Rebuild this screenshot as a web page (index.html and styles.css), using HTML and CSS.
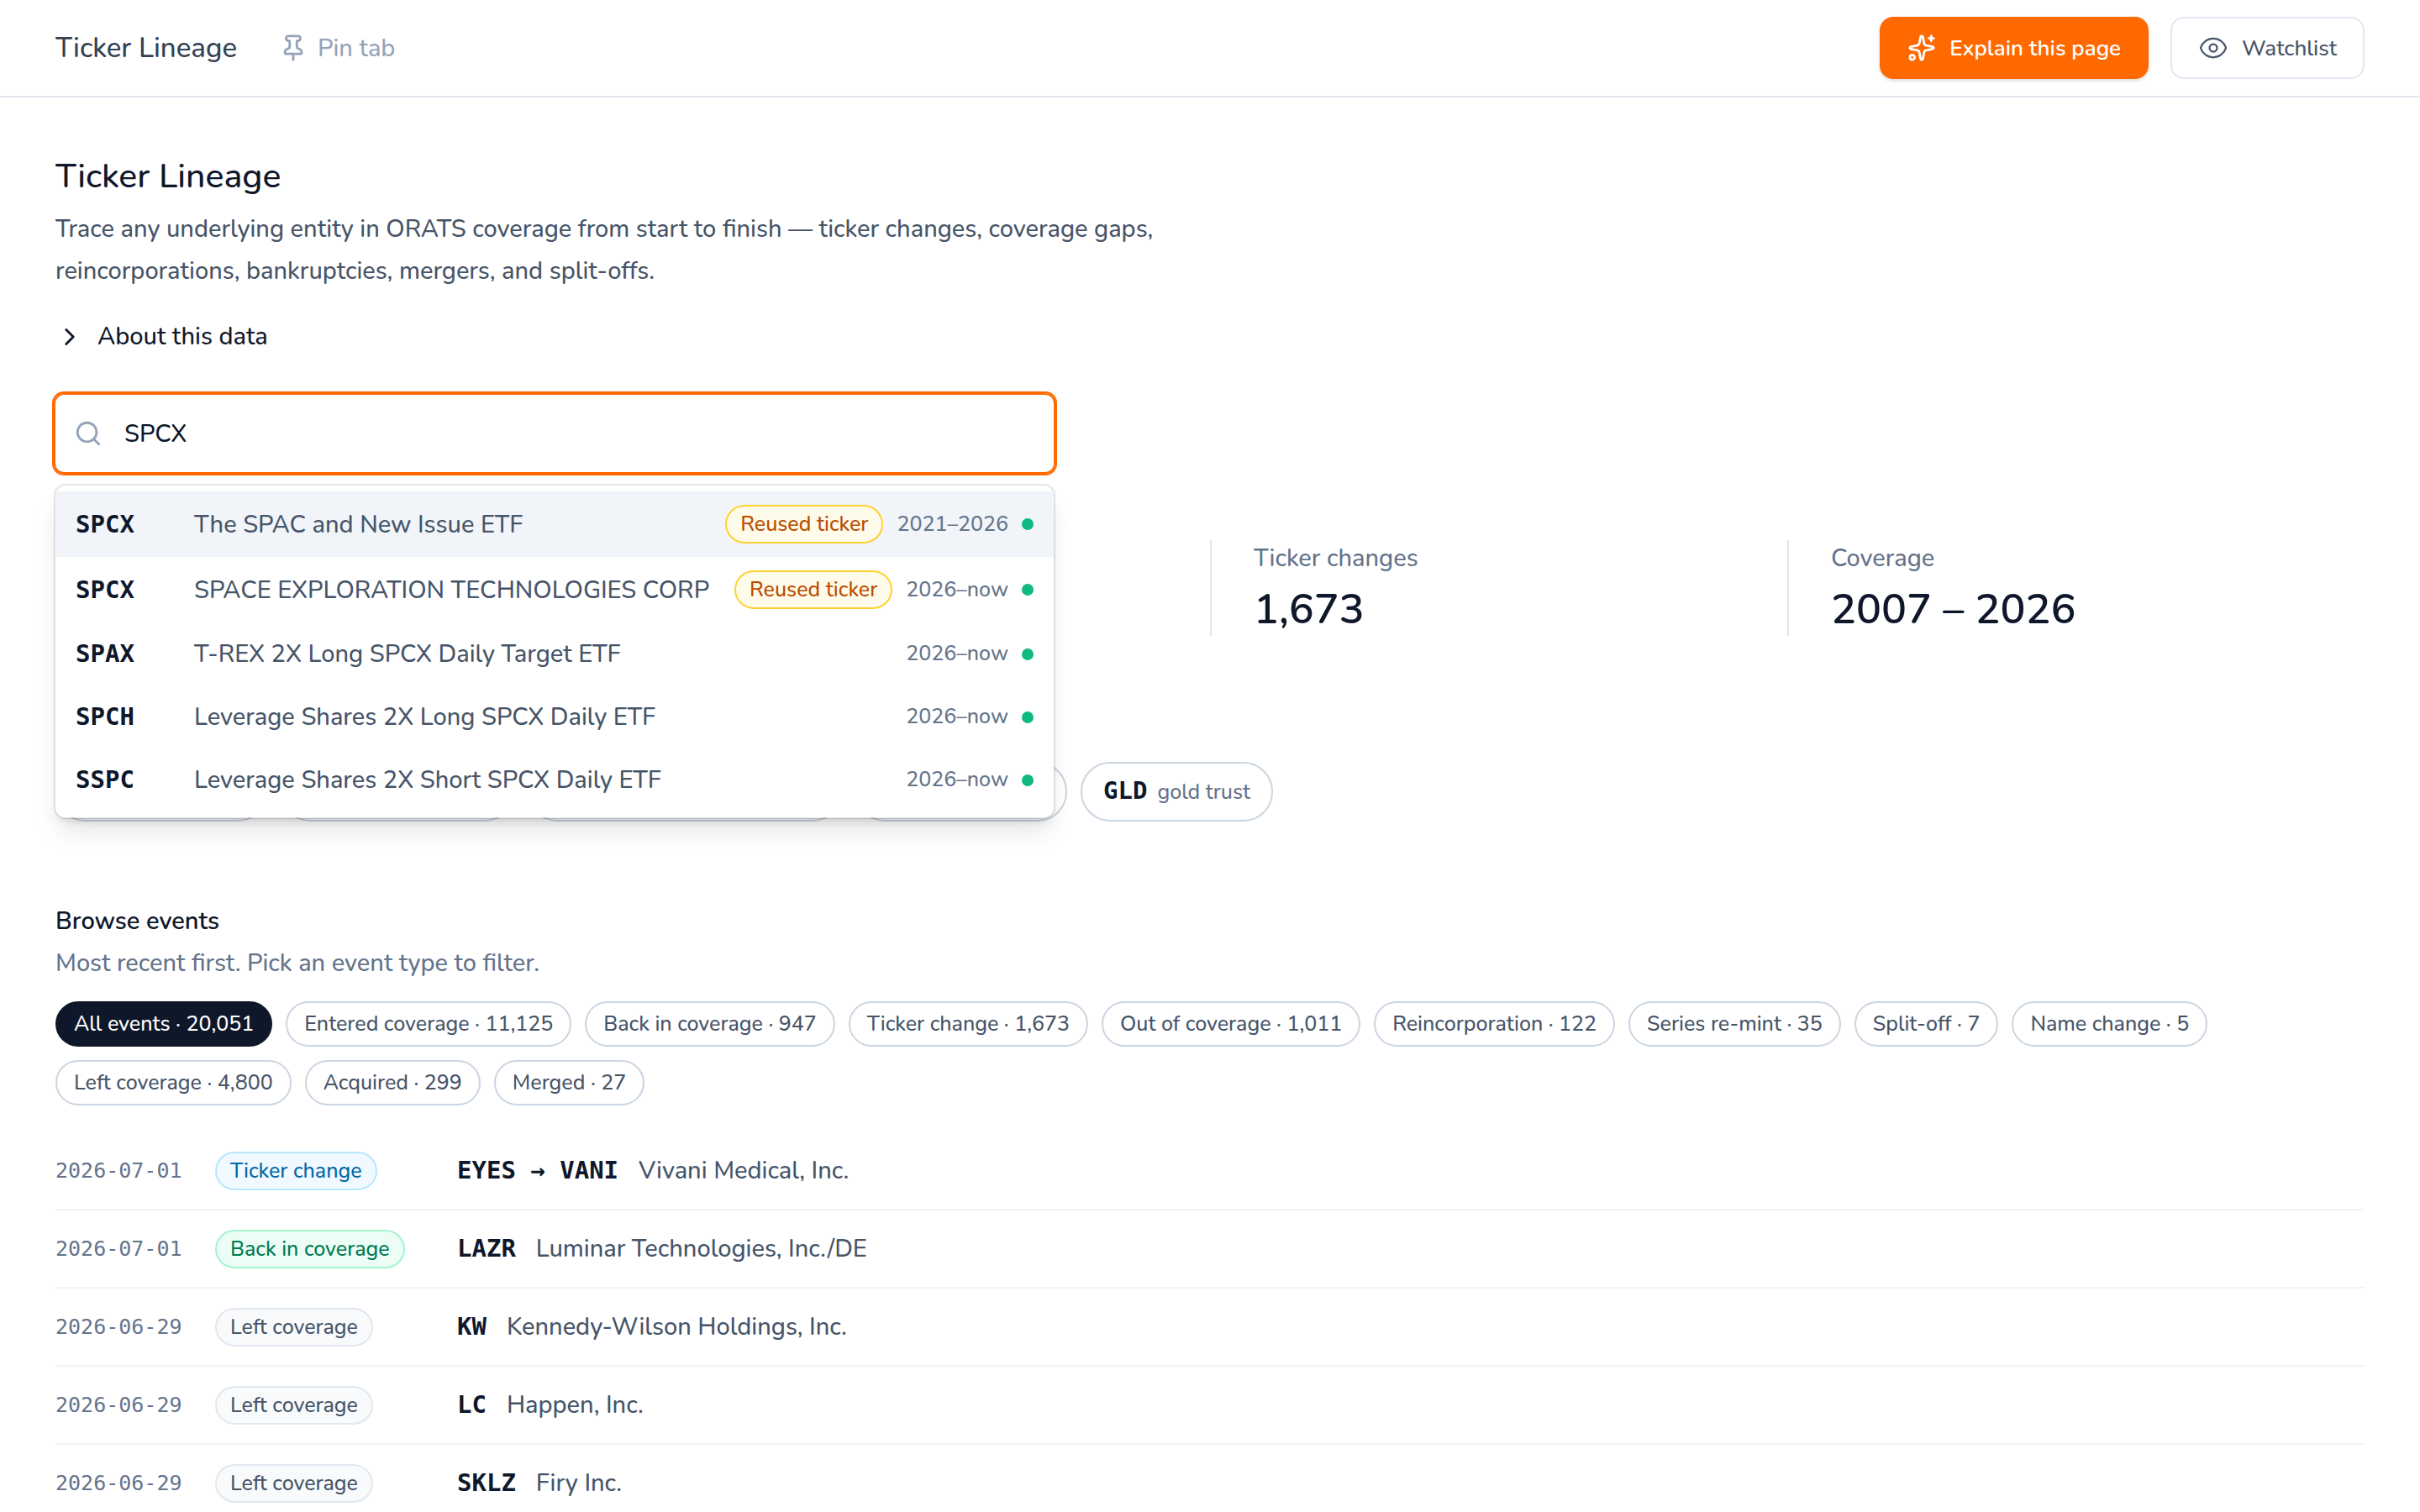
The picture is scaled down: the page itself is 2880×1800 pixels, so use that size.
FILE: index.html
```html
<!DOCTYPE html>
<html lang="en">
  <head>
    <meta charset="UTF-8" />
    <meta name="viewport" content="width=device-width, initial-scale=1.0" />
    <title>Ticker Lineage</title>
    <link rel="stylesheet" href="styles.css" />
  </head>
  <body>
    <!-- [1] Top bar -->
    <header class="topbar">
      <div class="topbar-left">
        <span class="topbar-title">Ticker Lineage</span>
        <button type="button" class="pin">
          <svg class="icon" viewBox="0 0 24 24" aria-hidden="true">
            <path d="M12 17v5" />
            <path d="M9 10.76a2 2 0 0 1-1.11 1.79l-1.78.9A2 2 0 0 0 5 15.24V16a1 1 0 0 0 1 1h12a1 1 0 0 0 1-1v-.76a2 2 0 0 0-1.11-1.79l-1.78-.9A2 2 0 0 1 15 10.76V7a1 1 0 0 1 1-1 2 2 0 0 0 0-4H8a2 2 0 0 0 0 4 1 1 0 0 1 1 1z" />
          </svg>
          Pin tab
        </button>
      </div>
      <div class="topbar-right">
        <button type="button" class="btn btn-primary">
          <svg class="icon" viewBox="0 0 24 24" aria-hidden="true">
            <path d="M11.017 2.814a1 1 0 0 1 1.966 0l1.051 5.558a2 2 0 0 0 1.594 1.594l5.558 1.051a1 1 0 0 1 0 1.966l-5.558 1.051a2 2 0 0 0-1.594 1.594l-1.051 5.558a1 1 0 0 1-1.966 0l-1.051-5.558a2 2 0 0 0-1.594-1.594l-5.558-1.051a1 1 0 0 1 0-1.966l5.558-1.051a2 2 0 0 0 1.594-1.594z" />
            <path d="M20 2v4" />
            <path d="M22 4h-4" />
            <circle cx="4" cy="20" r="2" />
          </svg>
          Explain this page
        </button>
        <button type="button" class="btn btn-outline">
          <svg class="icon icon-thin" viewBox="0 0 24 24" aria-hidden="true">
            <path d="M2.036 12.322a1.012 1.012 0 0 1 0-.639C3.423 7.51 7.36 4.5 12 4.5c4.638 0 8.573 3.007 9.963 7.178.07.207.07.431 0 .639C20.577 16.49 16.64 19.5 12 19.5c-4.638 0-8.573-3.007-9.963-7.178Z" />
            <circle cx="12" cy="12" r="3" />
          </svg>
          Watchlist
        </button>
      </div>
    </header>

    <main class="page">
      <!-- [2] Intro -->
      <h1>Ticker Lineage</h1>
      <p class="lead">
        Trace any underlying entity in ORATS coverage from start to finish — ticker changes, coverage gaps, reincorporations, bankruptcies, mergers, and split-offs.
      </p>
      <details class="about">
        <summary>
          <svg class="icon" viewBox="0 0 24 24" aria-hidden="true"><path d="m9 18 6-6-6-6" /></svg>
          About this data
        </summary>
      </details>

      <!-- [3] Search -->
      <div class="search">
        <div class="search-box">
          <svg class="icon" viewBox="0 0 24 24" aria-hidden="true">
            <circle cx="11" cy="11" r="8" />
            <path d="m21 21-4.3-4.3" />
          </svg>
          <input type="text" aria-label="Search tickers" value="SPCX" autocomplete="off" />
        </div>
        <ul class="results" role="listbox" aria-label="Matches">
          <li class="result active" role="option" aria-selected="true">
            <b class="mono">SPCX</b>
            <span class="result-name">The SPAC and New Issue ETF</span>
            <span class="badge amber">Reused ticker</span>
            <span class="years">2021–2026</span>
            <i class="dot"></i>
          </li>
          <li class="result" role="option">
            <b class="mono">SPCX</b>
            <span class="result-name">SPACE EXPLORATION TECHNOLOGIES CORP</span>
            <span class="badge amber">Reused ticker</span>
            <span class="years">2026–now</span>
            <i class="dot"></i>
          </li>
          <li class="result" role="option">
            <b class="mono">SPAX</b>
            <span class="result-name">T-REX 2X Long SPCX Daily Target ETF</span>
            <span class="years">2026–now</span>
            <i class="dot"></i>
          </li>
          <li class="result" role="option">
            <b class="mono">SPCH</b>
            <span class="result-name">Leverage Shares 2X Long SPCX Daily ETF</span>
            <span class="years">2026–now</span>
            <i class="dot"></i>
          </li>
          <li class="result" role="option">
            <b class="mono">SSPC</b>
            <span class="result-name">Leverage Shares 2X Short SPCX Daily ETF</span>
            <span class="years">2026–now</span>
            <i class="dot"></i>
          </li>
        </ul>
      </div>

      <!-- [4] Stats -->
      <dl class="stats">
        <div class="stat"></div>
        <div class="stat"></div>
        <div class="stat"><dt>Ticker changes</dt><dd>1,673</dd></div>
        <div class="stat"><dt>Coverage</dt><dd>2007 – 2026</dd></div>
      </dl>

      <!-- [5] Examples -->
      <div class="examples">
        <span class="example example-sm"></span>
        <span class="example example-md"></span>
        <span class="example example-lg"></span>
        <span class="example example-sm"></span>
        <button type="button" class="example"><b class="mono">GLD</b>gold trust</button>
      </div>

      <!-- [6] Events -->
      <section class="events">
        <h2>Browse events</h2>
        <p class="hint">Most recent first. Pick an event type to filter.</p>
        <div class="filters">
          <button type="button" class="filter on" aria-pressed="true">All events · 20,051</button>
          <button type="button" class="filter">Entered coverage · 11,125</button>
          <button type="button" class="filter">Back in coverage · 947</button>
          <button type="button" class="filter">Ticker change · 1,673</button>
          <button type="button" class="filter">Out of coverage · 1,011</button>
          <button type="button" class="filter">Reincorporation · 122</button>
          <button type="button" class="filter">Series re-mint · 35</button>
          <button type="button" class="filter">Split-off · 7</button>
          <button type="button" class="filter">Name change · 5</button>
          <button type="button" class="filter">Left coverage · 4,800</button>
          <button type="button" class="filter">Acquired · 299</button>
          <button type="button" class="filter">Merged · 27</button>
        </div>

        <ul class="event-list">
          <li class="event">
            <time class="mono">2026-07-01</time>
            <div><span class="badge sky">Ticker change</span></div>
            <div class="event-name"><b class="mono">EYES → VANI</b>Vivani Medical, Inc.</div>
          </li>
          <li class="event">
            <time class="mono">2026-07-01</time>
            <div><span class="badge green">Back in coverage</span></div>
            <div class="event-name"><b class="mono">LAZR</b>Luminar Technologies, Inc./DE</div>
          </li>
          <li class="event">
            <time class="mono">2026-06-29</time>
            <div><span class="badge">Left coverage</span></div>
            <div class="event-name"><b class="mono">KW</b>Kennedy-Wilson Holdings, Inc.</div>
          </li>
          <li class="event">
            <time class="mono">2026-06-29</time>
            <div><span class="badge">Left coverage</span></div>
            <div class="event-name"><b class="mono">LC</b>Happen, Inc.</div>
          </li>
          <li class="event">
            <time class="mono">2026-06-29</time>
            <div><span class="badge">Left coverage</span></div>
            <div class="event-name"><b class="mono">SKLZ</b>Firy Inc.</div>
          </li>
        </ul>
      </section>
    </main>
  </body>
</html>
```
FILE: styles.css
```css
/*
  Global styles
*/

* {
  margin: 0;
  padding: 0;
  box-sizing: border-box;
}
:root {
  --ink: #0f172a;
  --slate-700: #334155;
  --slate-600: #475569;
  --slate-500: #64748b;
  --slate-400: #94a3b8;
  --slate-300: #cad5e2;
  --slate-200: #e2e8f0;
  --orange: #ff6900;
}
body {
  color: var(--slate-600);
  background-color: #fff;
  font-family: Nunito, Lato, sans-serif;
  font-size: 29px;
  font-weight: 500;
  line-height: 43px;
}
button,
input {
  color: inherit;
  font: inherit;
  border: 0;
  background: none;
}
button {
  cursor: pointer;
}
ul {
  list-style: none;
}
.mono {
  font-family: "DejaVu Sans Mono", monospace;
}
b.mono {
  color: var(--ink);
  font-weight: 700;
}
.icon {
  flex: none;
  width: 34px;
  height: 34px;
  fill: none;
  stroke: currentColor;
  stroke-width: 2;
  stroke-linecap: round;
  stroke-linejoin: round;
}
.icon-thin {
  width: 36px;
  height: 36px;
  stroke-width: 1.5;
}

/*
  Top bar
*/

.topbar {
  display: flex;
  align-items: center;
  justify-content: space-between;
  padding: 20px 66px;
  border-bottom: 2px solid var(--slate-200);
}
.topbar-left,
.topbar-right,
.pin,
.btn {
  display: flex;
  align-items: center;
}
.topbar-left {
  gap: 50px;
}
.topbar-right {
  gap: 26px;
}
.topbar-title {
  color: var(--slate-700);
  font-size: 33px;
}
.pin {
  gap: 12px;
  color: var(--slate-400);
}
.btn {
  gap: 16px;
  height: 74px;
  padding: 0 31px;
  border: 2px solid transparent;
  border-radius: 16px;
  font-size: 26px;
}
.btn-primary {
  color: #fff;
  font-weight: 600;
  border-color: var(--orange);
  background-color: var(--orange);
  box-shadow: 0 2px 4px rgba(0, 0, 0, 0.15);
}
.btn-outline {
  border-color: var(--slate-200);
}

/*
  Intro
*/

.page {
  padding: 66px;
}
h1 {
  color: var(--ink);
  font-size: 41px;
  font-weight: 500;
  line-height: 56px;
}
.lead {
  max-width: 1340px;
  margin-top: 10px;
  line-height: 50px;
}
.about {
  margin-top: 31px;
  color: var(--ink);
}
.about summary {
  display: flex;
  gap: 16px;
  align-items: center;
  list-style: none;
  cursor: pointer;
}

/*
  Search
*/

.search {
  position: relative;
  max-width: 1192px;
  margin: 46px -2px 0;
}
.search-box {
  display: flex;
  gap: 26px;
  align-items: center;
  height: 96px;
  padding: 0 24px;
  border-radius: 12px;
  box-shadow: 0 0 0 2px var(--orange), inset 0 0 0 2px var(--orange);
}
.search-box .icon {
  color: var(--slate-400);
}
.search-box input {
  flex: 1;
  color: var(--ink);
  outline: none;
}
.results {
  position: absolute;
  top: 108px;
  left: 0;
  right: 0;
  z-index: 1;
  padding: 7px 0;
  overflow: hidden;
  border: 2px solid rgba(0, 0, 0, 0.1);
  border-radius: 14px;
  background-color: #fff;
  background-clip: padding-box;
  box-shadow: 0 20px 30px -6px rgba(0, 0, 0, 0.1),
    0 8px 12px -8px rgba(0, 0, 0, 0.2);
}
.result {
  display: flex;
  gap: 16px;
  align-items: center;
  padding: 16px 24px;
}
.result.active {
  background-color: #f1f5f9;
}
.result b {
  width: 125px;
}
.result-name {
  flex: 1;
}
.years {
  color: var(--slate-500);
  font-size: 25px;
}
.dot {
  width: 14px;
  height: 14px;
  border-radius: 50%;
  background-color: #10b981;
}
.badge {
  display: block;
  width: max-content;
  padding: 0 16px;
  border: 2px solid var(--slate-200);
  border-radius: 23px;
  background-color: #f8fafc;
  font-size: 25px;
  line-height: 42px;
}
.badge.amber {
  color: #bb4d00;
  border-color: #ffd230;
  background-color: #fffbeb;
}
.badge.sky {
  color: #0069a8;
  border-color: #b8e6fe;
  background-color: #f0f9ff;
}
.badge.green {
  color: #007a55;
  border-color: #a4f4cf;
  background-color: #ecfdf5;
}

/*
  Stats and examples
*/

.stats {
  display: grid;
  grid-template-columns: repeat(4, 1fr);
  margin-top: 79px;
}
.stat {
  padding-left: 50px;
  border-left: 2px solid #e5e5e5;
}
.stat:first-child {
  padding-left: 0;
  border-left: 0;
}
.stat dt {
  color: var(--slate-500);
}
.stat dd {
  margin-top: 8px;
  color: var(--ink);
  font-size: 50px;
  font-weight: 600;
  line-height: 63px;
}
.examples {
  display: flex;
  flex-wrap: wrap;
  gap: 16px;
  margin-top: 150px;
}
.example {
  display: flex;
  gap: 12px;
  align-items: baseline;
  padding: 11px 25px;
  border: 2px solid var(--slate-300);
  border-radius: 35px;
  color: var(--slate-500);
  font-size: 25px;
}
.example b {
  font-size: 29px;
}
.example-sm {
  width: 252px;
}
.example-md {
  width: 278px;
}
.example-lg {
  width: 374px;
}

/*
  Events
*/

.events {
  margin-top: 97px;
}
h2 {
  color: var(--ink);
  font-size: 29px;
  font-weight: 600;
}
.hint {
  margin-top: 7px;
  color: var(--slate-500);
}
.filters {
  display: flex;
  flex-wrap: wrap;
  gap: 16px;
  margin-top: 24px;
}
.filter {
  padding: 0 20px;
  border: 2px solid var(--slate-300);
  border-radius: 27px;
  font-size: 25px;
  line-height: 50px;
}
.filter.on {
  color: #fff;
  border-color: var(--ink);
  background-color: var(--ink);
}
.event-list {
  margin-top: 32px;
}
.event {
  display: grid;
  grid-template-columns: 190px 288px 1fr;
  align-items: center;
  min-height: 93px;
  border-bottom: 2px solid #f3f4f6;
}
.event time {
  color: var(--slate-500);
  font-size: 25px;
}
.event-name b {
  margin-right: 24px;
}
```
